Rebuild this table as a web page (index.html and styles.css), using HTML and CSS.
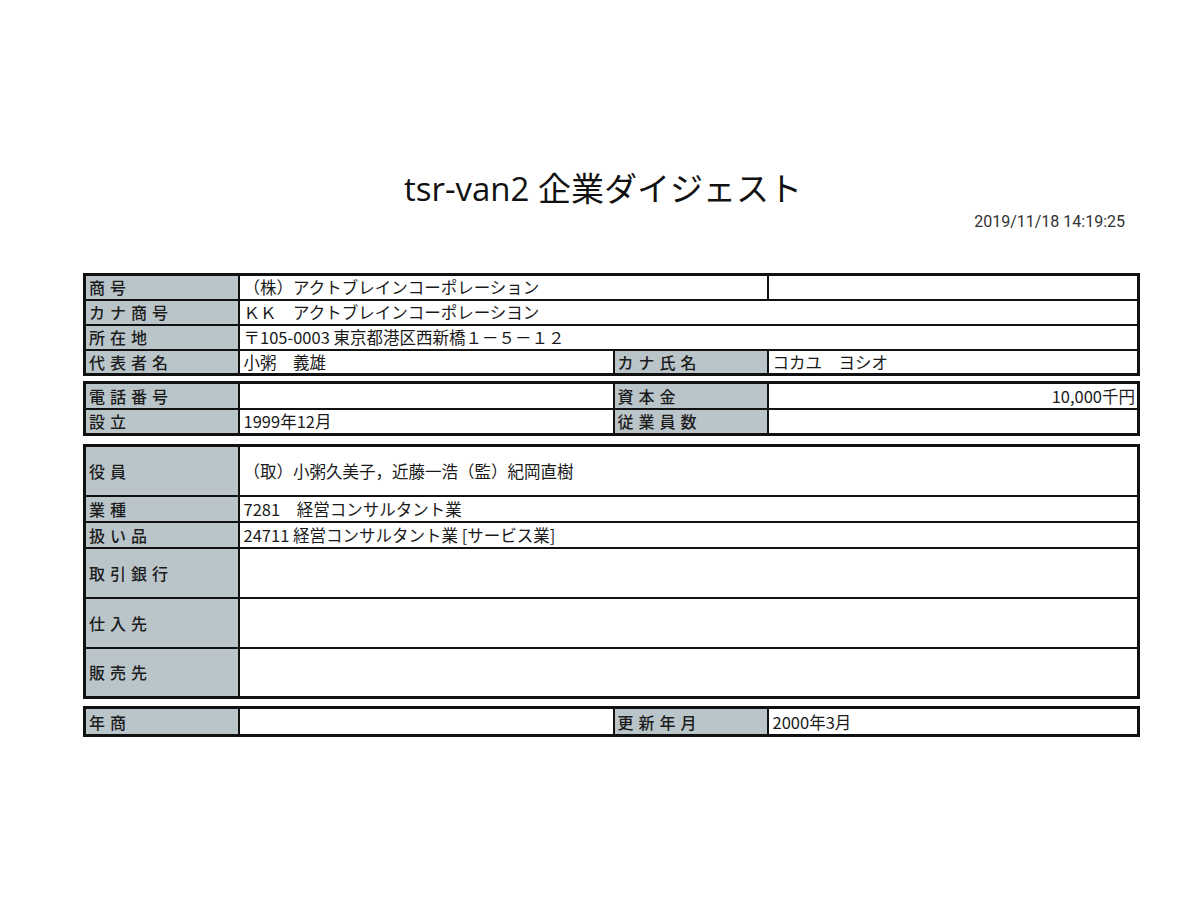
FILE: index.html
```html
<!DOCTYPE html>
<html lang="ja">
<head>
<meta charset="utf-8">
<title>tsr-van2 企業ダイジェスト</title>
<link rel="stylesheet" href="styles.css">
</head>
<body>
<div class="page">
  <h1 class="title">tsr-van2 企業ダイジェスト</h1>
  <div class="stamp">2019/11/18 14:19:25</div>

  <table class="grid g-basic">
    <colgroup><col class="c-lab"><col class="c-val"><col class="c-lab"><col class="c-val2"></colgroup>
    <tr><th>商号</th><td colspan="2">（株）アクトブレインコーポレーション</td><td></td></tr>
    <tr><th>カナ商号</th><td colspan="3">ＫＫ　アクトブレインコーポレーシヨン</td></tr>
    <tr><th>所在地</th><td colspan="3">〒105-0003 東京都港区西新橋１－５－１２</td></tr>
    <tr><th>代表者名</th><td>小粥　義雄</td><th>カナ氏名</th><td>コカユ　ヨシオ</td></tr>
  </table>

  <table class="grid g-money">
    <colgroup><col class="c-lab"><col class="c-val"><col class="c-lab"><col class="c-val2"></colgroup>
    <tr><th>電話番号</th><td></td><th>資本金</th><td class="num">10,000千円</td></tr>
    <tr><th>設立</th><td>1999年12月</td><th>従業員数</th><td></td></tr>
  </table>

  <table class="grid g-detail">
    <colgroup><col class="c-lab"><col class="c-val"><col class="c-lab"><col class="c-val2"></colgroup>
    <tr class="tall"><th>役員</th><td colspan="3">（取）小粥久美子，近藤一浩（監）紀岡直樹</td></tr>
    <tr><th>業種</th><td colspan="3">7281　経営コンサルタント業</td></tr>
    <tr><th>扱い品</th><td colspan="3">24711 経営コンサルタント業 [サービス業]</td></tr>
    <tr class="tall"><th>取引銀行</th><td colspan="3"></td></tr>
    <tr class="tall"><th>仕入先</th><td colspan="3"></td></tr>
    <tr class="tall"><th>販売先</th><td colspan="3"></td></tr>
  </table>

  <table class="grid g-sales">
    <colgroup><col class="c-lab"><col class="c-val"><col class="c-lab"><col class="c-val2"></colgroup>
    <tr><th>年商</th><td></td><th>更新年月</th><td>2000年3月</td></tr>
  </table>
</div>
</body>
</html>
```
FILE: styles.css
```css
html, body {
  margin: 0;
  padding: 0;
  background: #ffffff;
}

.page {
  width: 1054px;
  margin-left: 83px;
  padding-top: 170px;
  font-family: "Noto Sans CJK JP", "Noto Sans", sans-serif;
  color: #1a1a1a;
}

.title {
  margin: 0 0 0 -83px;
  width: 1200px;
  text-align: center;
  font-family: "Open Sans", "Noto Sans CJK JP", sans-serif;
  font-weight: 400;
  font-size: 33px;
  line-height: 38px;
  color: #111;
  padding-left: 6px;
  box-sizing: border-box;
}

.stamp {
  margin-top: 4px;
  text-align: right;
  padding-right: 12px;
  font-family: Roboto, "Liberation Sans", sans-serif;
  font-size: 16px;
  line-height: 20px;
  color: #333;
  margin-bottom: 41px;
}

.grid {
  width: 1054px;
  table-layout: fixed;
  border-collapse: collapse;
  border: 3px solid #111;
}

.g-basic { margin-bottom: 5px; }
.g-money { margin-bottom: 8px; }
.g-detail { margin-bottom: 7px; }

.c-lab { width: 154px; }
.c-val { width: 375px; }
.c-val2 { width: 371px; }

.g-basic tr { height: 25px; }
.g-money tr { height: 26px; }
.g-detail tr { height: 26px; }
.g-detail tr.tall { height: 50px; }
.g-sales tr { height: 28px; }

.grid th,
.grid td {
  border: 2px solid #111;
  padding: 0 4px;
  font-size: 16.5px;
  line-height: 20px;
  vertical-align: middle;
  text-align: left;
  white-space: nowrap;
  overflow: hidden;
}

.grid th {
  background: #bac5ca;
  font-weight: 500;
  letter-spacing: 5px;
  padding-left: 3px;
  font-size: 16px;
  color: #1c1c1c;
}

.grid td {
  background: #fff;
  font-weight: 400;
}

.grid td.num {
  text-align: right;
  padding-right: 2px;
}
```
